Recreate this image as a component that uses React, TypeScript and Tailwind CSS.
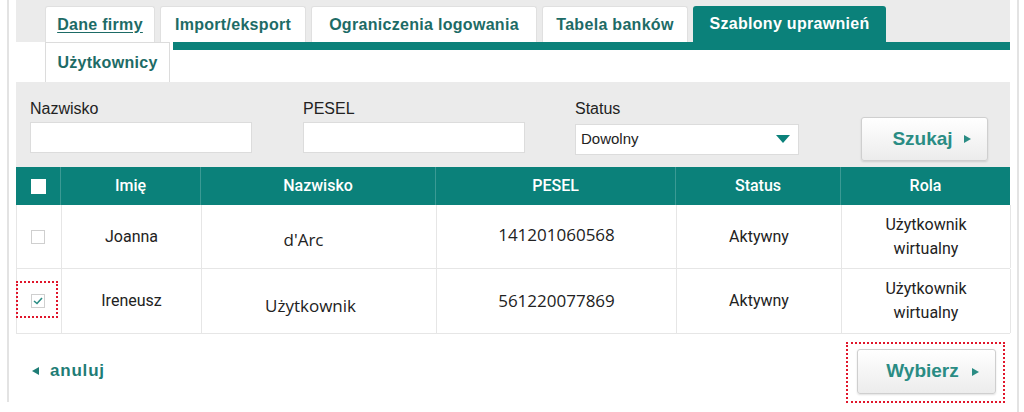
const tabs = [
  { label: 'Dane firmy', w: 'w-[110px]', underline: true },
  { label: 'Import/eksport', w: 'w-[146px]' },
  { label: 'Ograniczenia logowania', w: 'w-[226px]' },
  { label: 'Tabela banków', w: 'w-[146px]' },
  { label: 'Szablony uprawnień', w: 'w-[193px]', active: true },
];

const rows = [
  {
    first: 'Joanna',
    last: "d'Arc",
    lastCls: 'pr-[31px] pt-[6px]',
    pesel: '141201060568',
    peselCls: 'pb-[4px]',
    checked: false,
    h: 'h-[64px]',
  },
  {
    first: 'Ireneusz',
    last: 'Użytkownik',
    lastCls: 'pr-[17px] pt-[10px]',
    pesel: '561220077869',
    peselCls: '',
    checked: true,
    h: 'h-[65px]',
  },
];

const Arrow = ({ left }: { left?: boolean }) => (
  <svg width="7" height="8" viewBox="0 0 7 8" className="inline-block">
    {left ? <path d="M7 0 L0 4 L7 8 Z" fill="#1f7d76" /> : <path d="M0 0 L7 4 L0 8 Z" fill="#2a8c84" />}
  </svg>
);

const Checkbox = ({ checked }: { checked?: boolean }) => (
  <div className="w-[14px] h-[14px] border border-[#cfcfcf] bg-white flex items-center justify-center">
    {checked && (
      <svg width="10" height="8" viewBox="0 0 10 8">
        <path d="M1 4 L4 6.5 L9 1" stroke="#2a8c84" strokeWidth="1.6" fill="none" />
      </svg>
    )}
  </div>
);

const App = () => {
  return (
    <div className="w-[1024px] h-[412px] bg-white flex overflow-hidden font-['Liberation_Sans',Arial,sans-serif]">
      <div className="w-[7px]" />
      <div className="w-[2px] h-[402px] bg-[#e3e3e3]" />
      <div className="w-[7px]" />

      <div className="w-[994px] flex flex-col">
        {/* Tabs row 1 */}
        <div className="h-[42px] bg-[#ebebeb] flex items-end pl-[29px] gap-[5px]">
          {tabs.map((t) => (
            <div
              key={t.label}
              className={`${t.w} h-[36px] rounded-t-[3px] flex items-center justify-center text-[16px] font-bold tracking-[0.3px] ${
                t.active ? 'bg-[#0b817a] text-white' : 'bg-white text-[#1d6b66] border border-b-0 border-[#e0e0e0]'
              }`}
            >
              <span className={t.underline ? 'underline underline-offset-2' : ''}>{t.label}</span>
            </div>
          ))}
        </div>

        {/* Tabs row 2 */}
        <div className="h-[40px] flex pl-[29px]">
          <div className="w-[125px] h-[40px] border border-b-0 border-[#dcdcdc] bg-white flex items-center justify-center text-[16px] font-bold tracking-[0.3px] text-[#1d6b66]">
            Użytkownicy
          </div>
          <div className="flex-1 ml-[3px] h-[8px] bg-[#0b817a]" />
        </div>

        {/* Filters */}
        <div className="h-[85px] bg-[#ebebeb] flex items-start pl-[14px] pt-[17px] text-[16px] text-[#222]">
          <div className="flex flex-col w-[222px]">
            <span className="leading-[20px]">Nazwisko</span>
            <div className="mt-[3px] h-[31px] bg-white border border-[#dcdcdc]" />
          </div>
          <div className="flex flex-col w-[222px] ml-[51px]">
            <span className="leading-[20px]">PESEL</span>
            <div className="mt-[3px] h-[31px] bg-white border border-[#dcdcdc]" />
          </div>
          <div className="flex flex-col w-[224px] ml-[50px]">
            <span className="leading-[20px]">Status</span>
            <div className="mt-[5px] h-[31px] bg-white border border-[#dcdcdc] flex items-center justify-between pl-[5px] pr-[8px] text-[15px]">
              <span>Dowolny</span>
              <svg width="14" height="9" viewBox="0 0 14 9">
                <path d="M0 0 L14 0 L7 8 Z" fill="#0b817a" />
              </svg>
            </div>
          </div>
          <button className="ml-[62px] mt-[18px] w-[127px] h-[44px] rounded-[3px] border border-[#cfcfcf] bg-gradient-to-b from-white to-[#ececec] shadow-[0_1px_2px_rgba(0,0,0,0.12)] flex items-center justify-center gap-[11px] pl-[14px] text-[19px] font-bold text-[#2a8c84]">
            Szukaj <Arrow />
          </button>
        </div>

        {/* Table */}
        <div className="grid grid-cols-[45px_140px_235px_240px_165px_169px] h-[38px] bg-[#0b817a] text-white text-[16px] font-['Roboto',sans-serif] font-medium">
          <div className="flex items-center justify-center border-r border-[#3b9a94]">
            <div className="w-[15px] h-[15px] bg-white" />
          </div>
          <div className="flex items-center justify-center border-r border-[#3b9a94]">Imię</div>
          <div className="flex items-center justify-center border-r border-[#3b9a94]">Nazwisko</div>
          <div className="flex items-center justify-center border-r border-[#3b9a94]">PESEL</div>
          <div className="flex items-center justify-center border-r border-[#3b9a94]">Status</div>
          <div className="flex items-center justify-center">Rola</div>
        </div>
        {rows.map((r) => (
          <div
            key={r.pesel}
            className={`grid grid-cols-[45px_140px_235px_240px_165px_169px] ${r.h} border-b border-l border-[#e6e6e6] text-[#222] text-[16px] font-['Roboto',sans-serif]`}
          >
            <div className="relative flex items-center justify-center border-r border-[#e6e6e6] pr-[2px]">
              <Checkbox checked={r.checked} />
              {r.checked && (
                <div className="absolute left-[-1px] top-[12px] w-[42px] h-[37px] border-2 border-dotted border-[#e0162b]" />
              )}
            </div>
            <div className="flex items-center justify-center border-r border-[#e6e6e6]">{r.first}</div>
            <div className={`flex items-center justify-center border-r border-[#e6e6e6] font-['Open_Sans',sans-serif] text-[17px] ${r.lastCls}`}>
              {r.last}
            </div>
            <div className={`flex items-center justify-center border-r border-[#e6e6e6] font-['Open_Sans',sans-serif] text-[17px] ${r.peselCls}`}>
              {r.pesel}
            </div>
            <div className="flex items-center justify-center border-r border-[#e6e6e6]">Aktywny</div>
            <div className="flex flex-col items-center justify-center leading-[24px] border-r border-[#e6e6e6]">
              <span>Użytkownik</span>
              <span>wirtualny</span>
            </div>
          </div>
        ))}

        {/* Footer */}
        <div className="flex items-start justify-between pt-[8px]">
          <div className="flex items-center gap-[11px] pl-[16px] mt-[16px] text-[17px] font-bold tracking-[0.8px] text-[#1f7d76]">
            <Arrow left />
            <span>anuluj</span>
          </div>
          <div className="mr-[5px] border-2 border-dotted border-[#e0162b] pl-[9px] pr-[7px] pt-[5px] pb-[7px]">
            <button className="w-[139px] h-[45px] rounded-[3px] border border-[#cfcfcf] bg-gradient-to-b from-white to-[#ececec] shadow-[0_1px_2px_rgba(0,0,0,0.12)] flex items-center justify-center gap-[13px] pl-[12px] text-[19px] font-bold text-[#2a8c84]">
              Wybierz <Arrow />
            </button>
          </div>
        </div>
      </div>

      <div className="w-[7px]" />
      <div className="w-[2px] h-full bg-[#e3e3e3]" />
    </div>
  );
};

export default App;
